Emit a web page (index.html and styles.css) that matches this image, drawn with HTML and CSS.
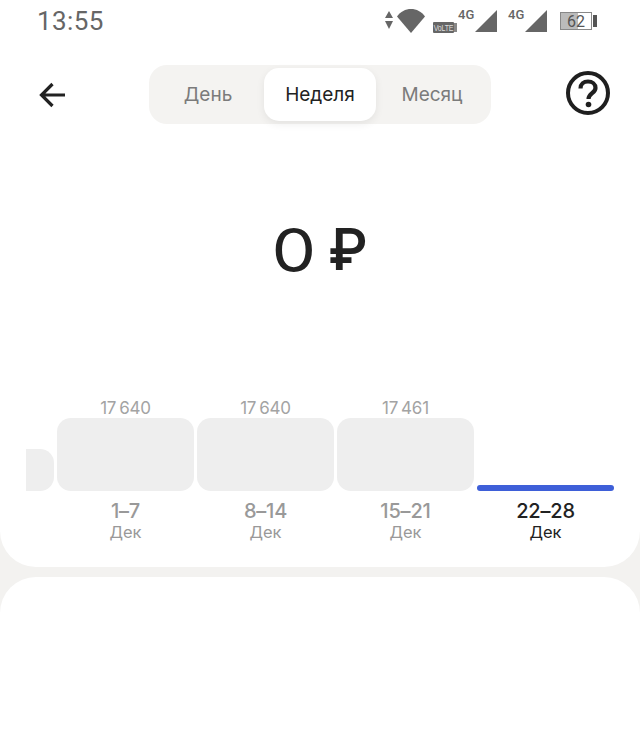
FILE: index.html
```html
<!DOCTYPE html>
<html>
<head>
<meta charset="utf-8">
<title>Неделя</title>
<link rel="stylesheet" href="styles.css">
</head>
<body>
<div class="card main">
    <!-- status bar -->
    <div class="status">
        <span class="time">13:55</span>
        <div class="status-icons">
            <svg class="ic-arrows" width="8" height="18" viewBox="0 0 8 18"><path d="M4 0L8 7H0zM4 18L0 10H8z"/></svg>
            <svg class="ic-wifi" width="28" height="24" viewBox="0 0 28 24"><path d="M14 24L0 7.5C3.500 2.500 8.500 0 14 0S24.500 2.500 28 7.500z"/></svg>
            <span class="volte"><span class="volte-text">VoLTE</span></span>
            <span class="volte-end"></span>
            <span class="net">4G</span>
            <svg class="ic-signal" width="22" height="22" viewBox="0 0 22 22"><path d="M22 0V22H0z"/></svg>
            <span class="net net2">4G</span>
            <svg class="ic-signal" width="22" height="22" viewBox="0 0 22 22"><path d="M22 0V22H0z"/></svg>
            <div class="battery"><span class="battery-fill"></span><span class="battery-num">62</span></div>
            <span class="battery-nub"></span>
        </div>
    </div>

    <!-- header -->
    <div class="header">
        <svg class="back" width="28" height="26" viewBox="0 0 28 26"><path d="M26 13H3M13.500 2L2.500 13L13.500 24" fill="none" stroke="#222" stroke-width="3.200"/></svg>
        <div class="tabs">
            <div class="tab">День</div>
            <div class="tab active">Неделя</div>
            <div class="tab">Месяц</div>
        </div>
        <svg class="help" width="46" height="46" viewBox="0 0 46 46">
            <circle cx="23" cy="23" r="20" fill="none" stroke="#1f1f1f" stroke-width="4"/>
            <path d="M15.500 18.500C15.500 14 18.800 11.500 23 11.500S30.500 14 30.500 18C30.500 23 23.500 23.500 23.500 29" fill="none" stroke="#1f1f1f" stroke-width="4.200"/>
            <circle cx="23.500" cy="34.500" r="2.800" fill="#1f1f1f"/>
        </svg>
    </div>

    <div class="amount"><span class="zero">0</span><span class="rub">₽</span></div>

    <!-- weeks -->
    <div class="weeks">
        <div class="week cut">
            <div class="plot"><div class="bar small"></div></div>
        </div>
        <div class="week">
            <div class="sum">17&#8201;640</div>
            <div class="plot"><div class="bar"></div></div>
            <div class="range">1–7</div>
            <div class="month">Дек</div>
        </div>
        <div class="week">
            <div class="sum">17&#8201;640</div>
            <div class="plot"><div class="bar"></div></div>
            <div class="range">8–14</div>
            <div class="month">Дек</div>
        </div>
        <div class="week">
            <div class="sum">17&#8201;461</div>
            <div class="plot"><div class="bar"></div></div>
            <div class="range">15–21</div>
            <div class="month">Дек</div>
        </div>
        <div class="week current">
            <div class="sum"></div>
            <div class="plot"><div class="bar empty"></div></div>
            <div class="range">22–28</div>
            <div class="month">Дек</div>
        </div>
    </div>
</div>
<div class="card second"></div>
</body>
</html>
```

FILE: styles.css
```css
* {
    box-sizing: border-box;
}
html, body {
    margin: 0;
    height: 100%;
}
body {
    background-color: #f3f2f0;
    font-family: "Inter", "Noto Sans", sans-serif;
    overflow: hidden;
}
.card {
    background-color: #fff;
}
.main {
    height: 567px;
    border-radius: 0 0 36px 36px;
}
.second {
    height: 159px;
    margin-top: 10px;
    border-radius: 36px 36px 0 0;
}

/* status bar */
.status {
    height: 42px;
    padding-left: 37px;
    display: flex;
    align-items: flex-start;
    justify-content: space-between;
}
.time {
    font-family: "Roboto", sans-serif;
    font-size: 26px;
    line-height: 42px;
    letter-spacing: 0.4px;
    color: #666;
}
.status-icons {
    width: 255px;
    height: 42px;
    padding-top: 9px;
    display: flex;
    align-items: flex-start;
    fill: #666;
}
.ic-arrows {
    margin-top: 2px;
    margin-right: 4px;
}
.volte {
    margin: 13px 0 0 8px;
    width: 21px;
    height: 11px;
    background-color: #666;
    border-radius: 1px;
    display: flex;
    justify-content: center;
}
.volte-text {
    color: #ddd;
    font-family: "Liberation Sans", sans-serif;
    font-size: 7px;
    line-height: 11px;
    letter-spacing: -0.2px;
    transform: scaleY(1.25);
}
.volte-end {
    width: 3px;
    height: 9px;
    margin: 14px 0 0 0;
    background-color: #888;
}
.net {
    width: 16px;
    margin-left: 1px;
    color: #666;
    font-family: "Roboto", sans-serif;
    font-size: 13px;
    line-height: 12px;
    font-weight: 500;
}
.net2 {
    margin-left: 11px;
}
.ic-signal {
    margin-top: 1px;
    margin-left: 1px;
}
.battery {
    position: relative;
    width: 32px;
    height: 18px;
    margin: 3px 0 0 13px;
    background-color: #fff;
    border: 1px solid #888;
}
.battery-fill {
    display: block;
    width: 55%;
    height: 100%;
    background-color: #bbb;
}
.battery-num {
    position: absolute;
    top: 0;
    left: 0;
    right: 0;
    text-align: center;
    color: #555;
    font-family: "Roboto", sans-serif;
    font-size: 16px;
    line-height: 17px;
}
.battery-nub {
    width: 4px;
    height: 12px;
    margin: 6px 0 0 1px;
    background-color: #555;
}

/* header */
.header {
    margin-top: 23px;
    padding: 0 29px 0 39px;
    display: flex;
    align-items: center;
    justify-content: space-between;
}
.tabs {
    width: 342px;
    height: 59px;
    margin-left: 82px;
    padding: 3px;
    background-color: #f4f3f1;
    border-radius: 18px;
    display: flex;
    align-items: center;
}
.tab {
    flex: 1;
    text-align: center;
    font-size: 19px;
    color: #7b7b7b;
}
.tab.active {
    flex: none;
    width: 112px;
    height: 53px;
    line-height: 53px;
    color: #222;
    background-color: #fff;
    border-radius: 15px;
    box-shadow: 0 3px 8px rgba(0, 0, 0, 0.07);
}
.help {
    margin-left: 74px;
    margin-top: -4px;
}

.amount {
    margin-top: 90px;
    height: 72px;
    padding-left: 3px;
    display: flex;
    justify-content: center;
    gap: 13px;
    font-size: 60px;
    line-height: 72px;
    color: #222;
}
.zero {
    display: inline-block;
    transform: scaleX(1.18);
}
.rub {
    font-family: "Roboto", "Inter", sans-serif;
    font-weight: 500;
    transform: scaleX(0.92);
    transform-origin: right center;
}

/* weeks */
.weeks {
    margin-top: 113px;
    margin-left: 26px;
    display: flex;
    gap: 3px;
}
.week {
    width: 137px;
    flex: none;
    text-align: center;
    color: #999;
}
.week.cut {
    width: 28px;
    overflow: hidden;
}
.week.cut .plot {
    margin-top: 19px;
    justify-content: flex-end;
}
.sum {
    height: 19px;
    font-size: 17px;
    line-height: 19px;
    letter-spacing: -0.2px;
    color: #a3a3a3;
}
.plot {
    height: 73px;
    display: flex;
    align-items: flex-end;
}
.bar {
    width: 137px;
    height: 73px;
    flex: none;
    background-color: #eeeeee;
    border-radius: 14px;
}
.bar.small {
    height: 42px;
}
.bar.empty {
    height: 6px;
    border-radius: 3px;
    background-color: #3e5fd8;
}
.range {
    margin-top: 8px;
    font-size: 20px;
    font-weight: 500;
    line-height: 24px;
    letter-spacing: -0.2px;
}
.month {
    font-size: 16.500px;
    line-height: 18px;
}
.current {
    color: #222;
}
```
